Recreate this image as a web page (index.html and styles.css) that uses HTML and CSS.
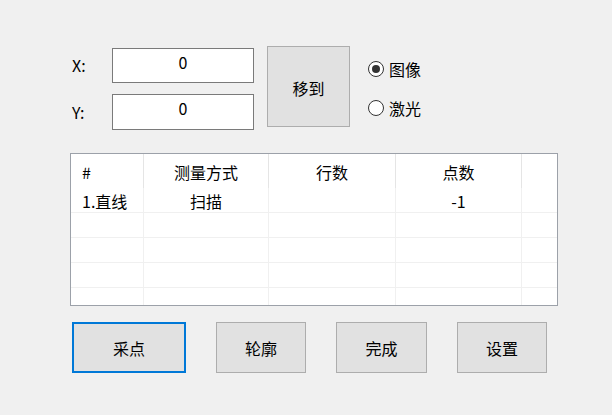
FILE: index.html
```html
<!DOCTYPE html>
<html lang="zh-CN">
<head>
<meta charset="utf-8">
<title>测量</title>
<link rel="stylesheet" href="styles.css">
</head>
<body>
<div class="app">
  <div class="top">
    <div class="coords">
      <span class="lbl">X:</span><div class="input">0</div>
      <span class="lbl">Y:</span><div class="input">0</div>
    </div>
    <button class="btn move">移到</button>
    <div class="radios">
      <div class="radio"><span class="circle checked"></span><span>图像</span></div>
      <div class="radio"><span class="circle"></span><span>激光</span></div>
    </div>
  </div>
  <div class="list">
    <div class="grid">
      <div class="hd left">#</div>
      <div class="hd">测量方式</div>
      <div class="hd">行数</div>
      <div class="hd">点数</div>
      <div class="hd last"></div>

      <div class="cell left">1.直线</div>
      <div class="cell">扫描</div>
      <div class="cell"></div>
      <div class="cell">-1</div>
      <div class="cell last"></div>

      <div class="cell"></div><div class="cell"></div><div class="cell"></div><div class="cell"></div><div class="cell last"></div>
      <div class="cell"></div><div class="cell"></div><div class="cell"></div><div class="cell"></div><div class="cell last"></div>
      <div class="cell"></div><div class="cell"></div><div class="cell"></div><div class="cell"></div><div class="cell last"></div>
      <div class="cell"></div><div class="cell"></div><div class="cell"></div><div class="cell"></div><div class="cell last"></div>
    </div>
  </div>
  <div class="actions">
    <button class="btn act default w114">采点</button>
    <button class="btn act w90">轮廓</button>
    <button class="btn act w91">完成</button>
    <button class="btn act w90">设置</button>
  </div>
</div>
</body>
</html>
```

FILE: styles.css
```css
html, body {
  margin: 0;
  padding: 0;
}
body {
  width: 612px;
  height: 415px;
  overflow: hidden;
  background: #f0f0f0;
  font-family: "Noto Sans CJK SC", "Noto Sans", sans-serif;
  font-size: 16px;
  color: #000;
}
.app {
  padding: 46px 0 0 70px;
}
.top {
  display: flex;
  align-items: flex-start;
}
.coords {
  display: grid;
  grid-template-columns: 42px 142px;
  grid-template-rows: 35px 36px;
  row-gap: 11px;
  margin-top: 2px;
}
.lbl {
  display: flex;
  align-items: center;
  padding-left: 2px;
  line-height: 23px;
}
.input {
  box-sizing: border-box;
  background: #fff;
  border: 1px solid #7a7a7a;
  text-align: center;
  line-height: 23px;
  padding-top: 2px;
}
.btn {
  box-sizing: border-box;
  font-family: inherit;
  font-size: 16px;
  color: #000;
  background: #e1e1e1;
  border: 1px solid #adadad;
  border-radius: 0;
  padding: 2px 0 0 0;
  line-height: 23px;
  margin: 0;
}
.move {
  width: 83px;
  height: 81px;
  margin-left: 13px;
  padding-top: 4px;
}
.radios {
  display: flex;
  flex-direction: column;
  gap: 15px;
  margin-left: 18px;
  margin-top: 11px;
}
.radio {
  display: flex;
  align-items: center;
  height: 24px;
  gap: 5px;
  line-height: 23px;
}
.circle {
  box-sizing: border-box;
  width: 16px;
  height: 16px;
  border: 1px solid #333;
  border-radius: 50%;
  background: #fff;
  display: flex;
  align-items: center;
  justify-content: center;
}
.circle.checked::after {
  content: "";
  width: 8px;
  height: 8px;
  border-radius: 50%;
  background: #333;
}
.list {
  box-sizing: border-box;
  width: 488px;
  height: 153px;
  margin-top: 23px;
  border: 1px solid #9ca1a9;
  background: #fff;
  overflow: hidden;
}
.grid {
  display: grid;
  grid-template-columns: 73px 125px 127px 126px 1fr;
  grid-template-rows: 34px;
  grid-auto-rows: 25px;
}
.hd, .cell {
  box-sizing: border-box;
  display: flex;
  align-items: center;
  justify-content: center;
  line-height: 23px;
  white-space: nowrap;
}
.hd {
  border-right: 1px solid #e5e5e5;
  padding-top: 3px;
}
.cell {
  border-right: 1px solid #f0f0f0;
  border-bottom: 1px solid #f0f0f0;
  padding-top: 2px;
}
.hd.last, .cell.last {
  border-right: none;
}
.left {
  justify-content: flex-start;
  padding-left: 11px;
}
.actions {
  display: flex;
  gap: 30px;
  margin-top: 16px;
  padding-left: 2px;
}
.act {
  height: 51px;
}
.w114 { width: 114px; }
.w90 { width: 90px; }
.w91 { width: 91px; }
.default {
  border: 2px solid #0078d7;
}
```
